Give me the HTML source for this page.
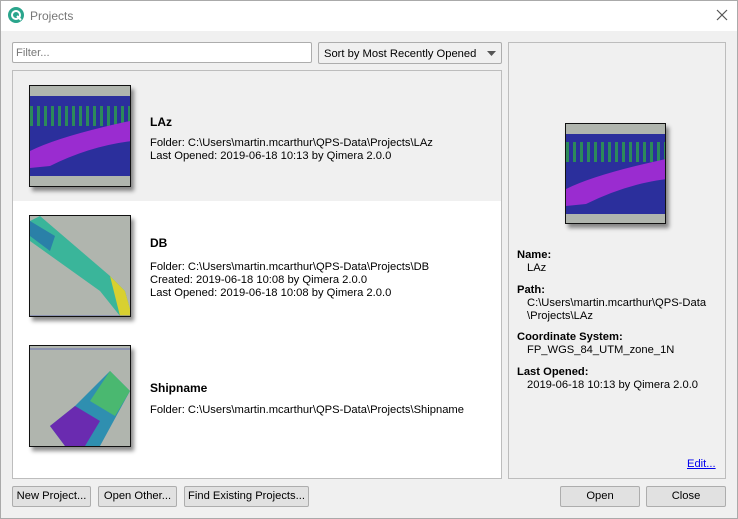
<!DOCTYPE html>
<html><head><style>
*{box-sizing:border-box;margin:0;padding:0}
body{width:738px;height:519px;background:#f0f0f0;font-family:"Liberation Sans",sans-serif;font-size:11.2px;color:#000;position:relative;overflow:hidden}
.win{position:absolute;left:0;top:0;width:738px;height:519px;box-shadow:inset 0 0 0 1px #aaa}
.abs{position:absolute}
.title{left:1px;top:1px;width:736px;height:30px;background:#fff}
.btn{position:absolute;height:21px;border:1px solid #adadad;background:#e1e1e1;text-align:center;line-height:19px;border-radius:2px}
.thumb{position:absolute;width:102px;height:102px;border:1px solid #111;box-shadow:3px 4px 4px rgba(0,0,0,.45);overflow:hidden;background:#b0b5ae}
.t{position:absolute;white-space:nowrap;line-height:14px}
b{font-weight:bold}
</style></head><body>
<div class="win">
<div class="abs title">
 <svg class="abs" style="left:7px;top:6px" width="16" height="16"><circle cx="8" cy="8" r="8" fill="#2aa58c"/><circle cx="8" cy="8" r="4" fill="none" stroke="#fff" stroke-width="2"/><line x1="9" y1="9" x2="13" y2="13" stroke="#fff" stroke-width="2"/></svg>
 <div class="t" style="left:29px;top:8px;color:#777;font-size:12px">Projects</div>
 <svg class="abs" style="left:715px;top:8px" width="12" height="12"><path d="M1 1L11 11M11 1L1 11" stroke="#555" stroke-width="1.2"/></svg>
</div>
<div class="abs" style="left:12px;top:42px;width:300px;height:21px;background:#fff;border:1px solid #adadad;border-radius:2px"><span class="t" style="left:3px;top:3px;color:#777">Filter...</span></div>
<div class="abs" style="left:318px;top:42px;width:184px;height:22px;background:#f0f0f0;border:1px solid #adadad;border-radius:2px"><span class="t" style="left:5px;top:4px">Sort by Most Recently Opened</span><svg class="abs" style="left:168px;top:8px" width="9" height="5"><path d="M0 0H9L4.5 5Z" fill="#555"/></svg></div>
<div class="abs" style="left:12px;top:70px;width:490px;height:409px;background:#fff;border:1px solid #bdbdbd">
 <div class="abs" style="left:0;top:0;width:488px;height:130px;background:#f0f0f0"></div>
</div>
<div class="thumb" style="left:29px;top:85px"><div class="abs" style="left:0;top:10px;width:102px;height:80px;background:#2b2f9c"></div><div class="abs" style="left:0;top:20px;width:102px;height:20px;background:repeating-linear-gradient(90deg,#2c8a5a 0 3px,#2b2f9c 3px 7px)"></div><svg class="abs" style="left:0;top:10px" width="102" height="80"><path d="M0 55Q30 40 100 25L102 45Q60 50 20 70L0 72Z" fill="#9a2cd0"/></svg></div>
<div class="thumb" style="left:29px;top:215px"><svg width="102" height="102"><path d="M0 5L0 25L70 75L90 100L102 100L95 75L80 60L10 0Z" fill="#3ab59a"/><path d="M0 5L0 20L20 35L25 20Z" fill="#2a80a8"/><path d="M80 60L95 75L102 100L90 100Z" fill="#d8d030"/><line x1="0" y1="100" x2="102" y2="100" stroke="#6670b0"/></svg></div>
<div class="thumb" style="left:29px;top:345px"><svg width="102" height="102"><line x1="0" y1="3" x2="102" y2="3" stroke="#6670b0"/><path d="M80 25L100 45L70 100L35 100L20 80L45 60Z" fill="#2f8fb0"/><path d="M80 25L100 45L85 70L60 55Z" fill="#4ab870"/><path d="M20 80L45 60L70 75L55 100L35 100Z" fill="#6a2bb0"/></svg></div>
<div class="thumb" style="left:565px;top:123px;width:101px;height:101px"><div class="abs" style="left:0;top:10px;width:101px;height:80px;background:#2b2f9c"></div><div class="abs" style="left:0;top:18px;width:101px;height:20px;background:repeating-linear-gradient(90deg,#2c8a5a 0 3px,#2b2f9c 3px 7px)"></div><svg class="abs" style="left:0;top:10px" width="101" height="80"><path d="M0 55Q30 40 100 25L101 45Q60 50 20 70L0 72Z" fill="#9a2cd0"/></svg></div>
<div class="t" style="left:150px;top:115px;font-size:12px"><b>LAz</b></div>
<div class="t" style="left:150px;top:136px">Folder: C:\Users\martin.mcarthur\QPS-Data\Projects\LAz</div>
<div class="t" style="left:150px;top:149px">Last Opened: 2019-06-18 10:13 by Qimera 2.0.0</div>
<div class="t" style="left:150px;top:236px;font-size:12px"><b>DB</b></div>
<div class="t" style="left:150px;top:260px">Folder: C:\Users\martin.mcarthur\QPS-Data\Projects\DB</div>
<div class="t" style="left:150px;top:273px">Created: 2019-06-18 10:08 by Qimera 2.0.0</div>
<div class="t" style="left:150px;top:286px">Last Opened: 2019-06-18 10:08 by Qimera 2.0.0</div>
<div class="t" style="left:150px;top:381px;font-size:12px"><b>Shipname</b></div>
<div class="t" style="left:150px;top:403px">Folder: C:\Users\martin.mcarthur\QPS-Data\Projects\Shipname</div>
<div class="abs" style="left:508px;top:42px;width:218px;height:437px;border:1px solid #bdbdbd"></div>
<div class="t" style="left:517px;top:248px"><b>Name:</b></div>
<div class="t" style="left:527px;top:261px">LAz</div>
<div class="t" style="left:517px;top:283px"><b>Path:</b></div>
<div class="t" style="left:527px;top:296px">C:\Users\martin.mcarthur\QPS-Data</div>
<div class="t" style="left:527px;top:309px">\Projects\LAz</div>
<div class="t" style="left:517px;top:330px"><b>Coordinate System:</b></div>
<div class="t" style="left:527px;top:343px">FP_WGS_84_UTM_zone_1N</div>
<div class="t" style="left:517px;top:365px"><b>Last Opened:</b></div>
<div class="t" style="left:527px;top:378px">2019-06-18 10:13 by Qimera 2.0.0</div>
<div class="t" style="left:687px;top:457px;color:#00e;text-decoration:underline">Edit...</div>
<div class="btn" style="left:12px;top:486px;width:79px">New Project...</div>
<div class="btn" style="left:98px;top:486px;width:79px">Open Other...</div>
<div class="btn" style="left:184px;top:486px;width:125px">Find Existing Projects...</div>
<div class="btn" style="left:560px;top:486px;width:80px">Open</div>
<div class="btn" style="left:646px;top:486px;width:80px">Close</div>
</div>
</body></html>
